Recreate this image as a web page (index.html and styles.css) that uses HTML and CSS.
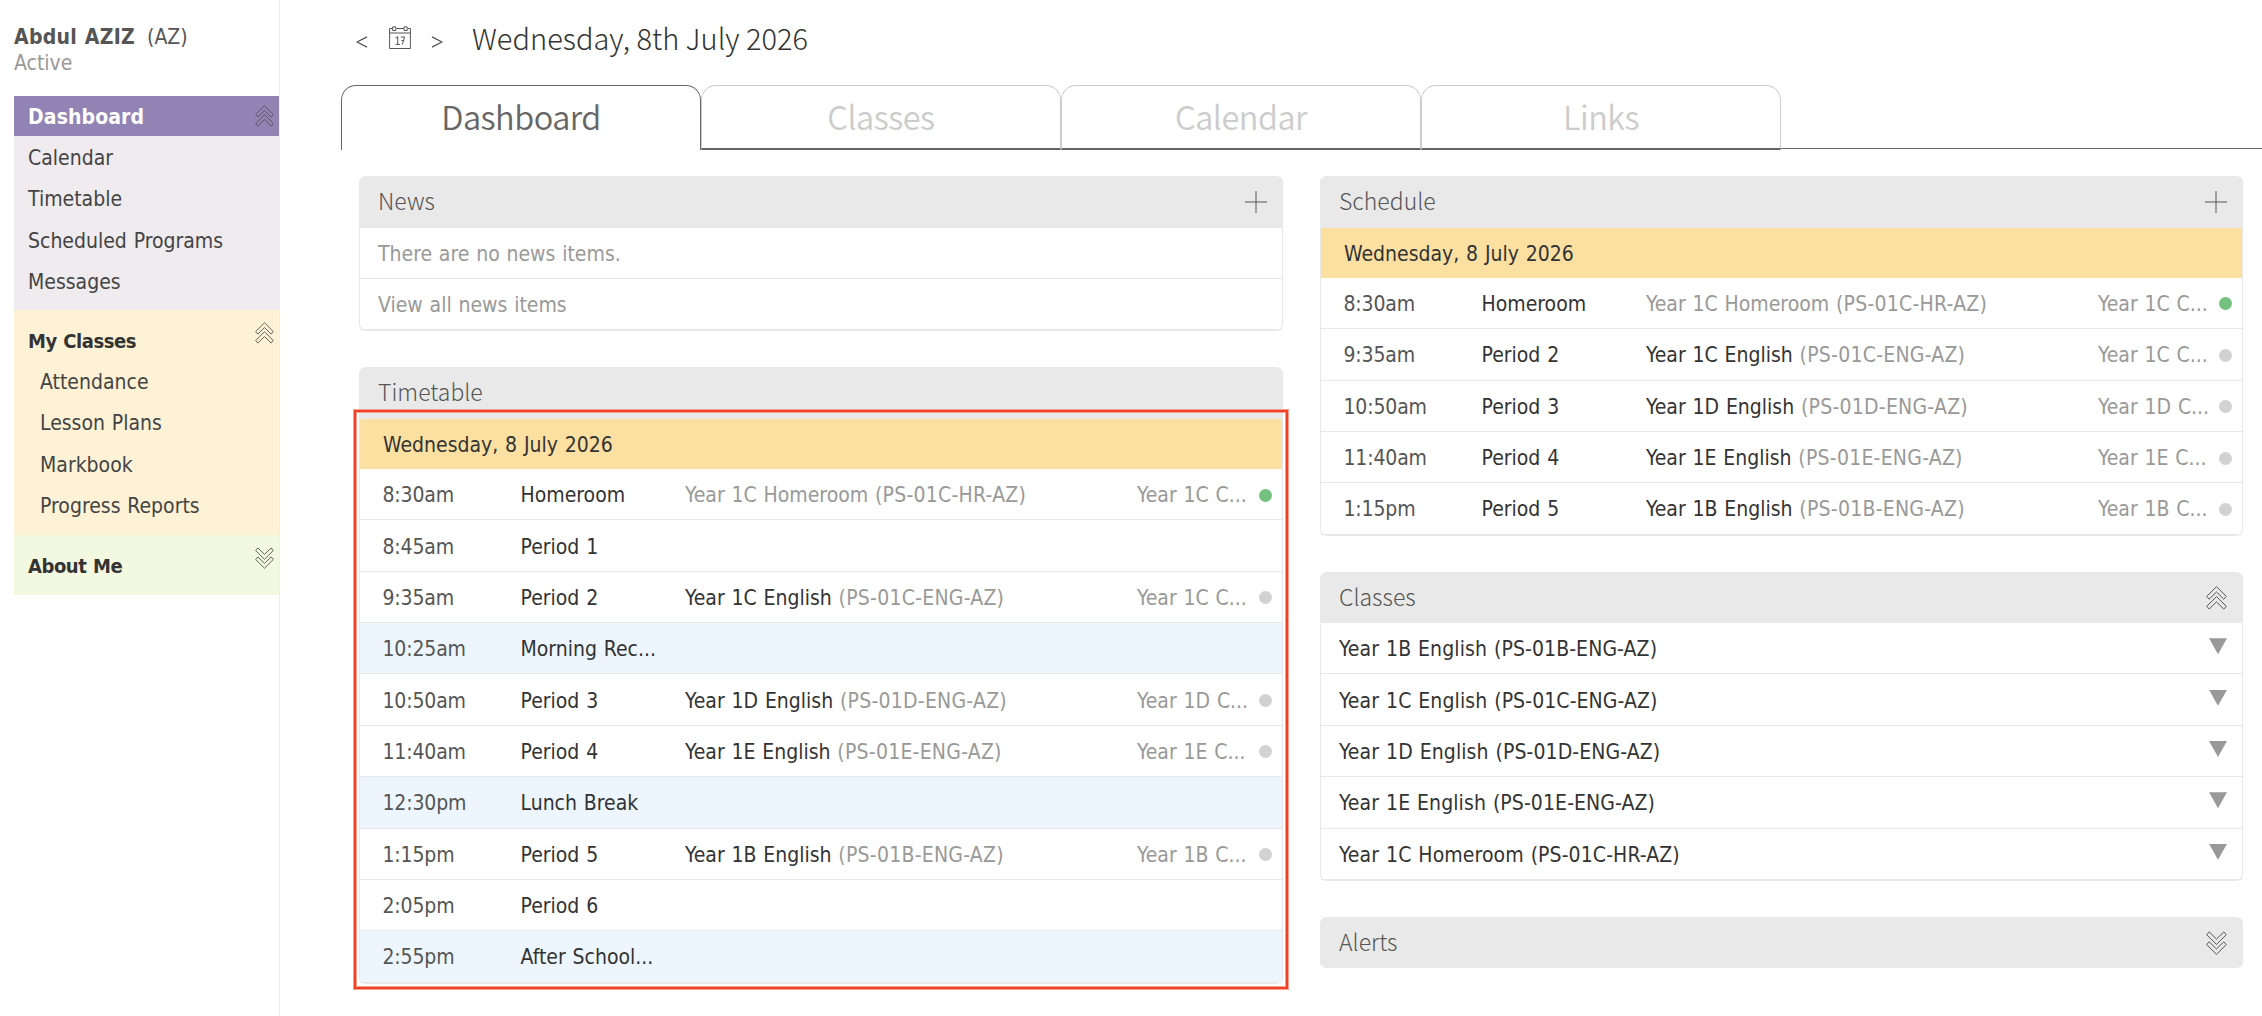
FILE: index.html
```
<!DOCTYPE html>
<html lang="en">
<head>
    <meta charset="UTF-8">
    <meta name="viewport" content="width=device-width, initial-scale=1.0">
    <title>Dashboard</title>
    <link rel="stylesheet" href="styles.css">
</head>
<body>
    <!-- Shared icons -->
    <svg class="icon-defs" width="0" height="0">
        <symbol id="chevrons-up" viewBox="0 0 21 24">
            <path d="M10.5 .7L20.3 10.4L17.8 13.2L10.5 6L3.2 13.2L.7 10.4Z"/>
            <path d="M10.5 10.6L20.3 20.3L17.8 23.1L10.5 15.9L3.2 23.1L.7 20.3Z"/>
        </symbol>
        <symbol id="chevrons-down" viewBox="0 0 21 24">
            <path d="M10.5 23.3L20.3 13.6L17.8 10.8L10.5 18L3.2 10.8L.7 13.6Z"/>
            <path d="M10.5 13.4L20.3 3.7L17.8 .9L10.5 8.1L3.2 .9L.7 3.7Z"/>
        </symbol>
        <symbol id="plus" viewBox="0 0 22 22">
            <path d="M11 0V22M0 11H22"/>
        </symbol>
    </svg>

    <div class="layout">
        <aside class="sidebar">
            <div class="user">
                <div class="user-name"><strong>Abdul AZIZ</strong><span>(AZ)</span></div>
                <div class="user-status">Active</div>
            </div>
            <nav class="menu">
                <div class="menu-group menu-dashboard">
                    <div class="menu-title"><span>Dashboard</span><svg class="chevrons"><use href="#chevrons-up"/></svg></div>
                    <a class="menu-item">Calendar</a>
                    <a class="menu-item">Timetable</a>
                    <a class="menu-item">Scheduled Programs</a>
                    <a class="menu-item">Messages</a>
                </div>
                <div class="menu-group menu-classes">
                    <div class="menu-title"><span>My Classes</span><svg class="chevrons"><use href="#chevrons-up"/></svg></div>
                    <a class="menu-item">Attendance</a>
                    <a class="menu-item">Lesson Plans</a>
                    <a class="menu-item">Markbook</a>
                    <a class="menu-item">Progress Reports</a>
                </div>
                <div class="menu-group menu-about">
                    <div class="menu-title"><span>About Me</span><svg class="chevrons"><use href="#chevrons-down"/></svg></div>
                </div>
            </nav>
        </aside>

        <main class="main">
            <header class="date-bar">
                <svg class="arrow" viewBox="0 0 12 12"><path d="M11 .8L1 6L11 11.2"/></svg>
                <svg class="calendar-icon" viewBox="0 0 22 24">
                    <path d="M3 2.5H.6V22.5H21.4V2.5H19M7.5 2.5H14.5M.6 7H21.4"/>
                    <rect x="3.6" y=".9" width="3.2" height="3.6"/>
                    <rect x="15" y=".9" width="3.2" height="3.6"/>
                    <path d="M6.5 12L8.7 10.6V18.4M6.6 18.4H10.8M11.8 11H15.6L13.2 18.6M12.4 14.6H15.2"/>
                </svg>
                <svg class="arrow" viewBox="0 0 12 12"><path d="M1 .8L11 6L1 11.2"/></svg>
                <h1>Wednesday, 8th July 2026</h1>
            </header>

            <div class="tabs">
                <a class="tab active">Dashboard</a>
                <a class="tab">Classes</a>
                <a class="tab">Calendar</a>
                <a class="tab">Links</a>
                <span class="tabs-rest"></span>
            </div>

            <div class="columns">
                <div class="column">
                    <section class="panel">
                        <h2>News<svg class="plus"><use href="#plus"/></svg></h2>
                        <div class="row muted">There are no news items.</div>
                        <div class="row muted">View all news items</div>
                    </section>

                    <section class="panel">
                        <h2>Timetable</h2>
                        <div class="day">Wednesday, 8 July 2026</div>
                        <div class="row period"><time>8:30am</time><span>Homeroom</span><span class="muted">Year 1C Homeroom <em>(PS-01C-HR-AZ)</em></span><span class="muted">Year 1C C...</span><i class="dot done"></i></div>
                        <div class="row period"><time>8:45am</time><span>Period 1</span></div>
                        <div class="row period"><time>9:35am</time><span>Period 2</span><span>Year 1C English <em>(PS-01C-ENG-AZ)</em></span><span class="muted">Year 1C C...</span><i class="dot"></i></div>
                        <div class="row period break"><time>10:25am</time><span>Morning Rec...</span></div>
                        <div class="row period"><time>10:50am</time><span>Period 3</span><span>Year 1D English <em>(PS-01D-ENG-AZ)</em></span><span class="muted">Year 1D C...</span><i class="dot"></i></div>
                        <div class="row period"><time>11:40am</time><span>Period 4</span><span>Year 1E English <em>(PS-01E-ENG-AZ)</em></span><span class="muted">Year 1E C...</span><i class="dot"></i></div>
                        <div class="row period break"><time>12:30pm</time><span>Lunch Break</span></div>
                        <div class="row period"><time>1:15pm</time><span>Period 5</span><span>Year 1B English <em>(PS-01B-ENG-AZ)</em></span><span class="muted">Year 1B C...</span><i class="dot"></i></div>
                        <div class="row period"><time>2:05pm</time><span>Period 6</span></div>
                        <div class="row period break"><time>2:55pm</time><span>After School...</span></div>
                        <div class="highlight"></div>
                    </section>
                </div>

                <div class="column">
                    <section class="panel">
                        <h2>Schedule<svg class="plus"><use href="#plus"/></svg></h2>
                        <div class="day">Wednesday, 8 July 2026</div>
                        <div class="row period"><time>8:30am</time><span>Homeroom</span><span class="muted">Year 1C Homeroom <em>(PS-01C-HR-AZ)</em></span><span class="muted">Year 1C C...</span><i class="dot done"></i></div>
                        <div class="row period"><time>9:35am</time><span>Period 2</span><span>Year 1C English <em>(PS-01C-ENG-AZ)</em></span><span class="muted">Year 1C C...</span><i class="dot"></i></div>
                        <div class="row period"><time>10:50am</time><span>Period 3</span><span>Year 1D English <em>(PS-01D-ENG-AZ)</em></span><span class="muted">Year 1D C...</span><i class="dot"></i></div>
                        <div class="row period"><time>11:40am</time><span>Period 4</span><span>Year 1E English <em>(PS-01E-ENG-AZ)</em></span><span class="muted">Year 1E C...</span><i class="dot"></i></div>
                        <div class="row period"><time>1:15pm</time><span>Period 5</span><span>Year 1B English <em>(PS-01B-ENG-AZ)</em></span><span class="muted">Year 1B C...</span><i class="dot"></i></div>
                    </section>

                    <section class="panel">
                        <h2>Classes<svg class="chevrons"><use href="#chevrons-up"/></svg></h2>
                        <div class="row class">Year 1B English (PS-01B-ENG-AZ)<i class="triangle"></i></div>
                        <div class="row class">Year 1C English (PS-01C-ENG-AZ)<i class="triangle"></i></div>
                        <div class="row class">Year 1D English (PS-01D-ENG-AZ)<i class="triangle"></i></div>
                        <div class="row class">Year 1E English (PS-01E-ENG-AZ)<i class="triangle"></i></div>
                        <div class="row class">Year 1C Homeroom (PS-01C-HR-AZ)<i class="triangle"></i></div>
                    </section>

                    <section class="panel collapsed">
                        <h2>Alerts<svg class="chevrons"><use href="#chevrons-down"/></svg></h2>
                    </section>
                </div>
            </div>
        </main>
    </div>
</body>
</html>
```
FILE: styles.css
```
* {
    box-sizing: border-box;
}

body {
    margin: 0;
    background: #fff;
    color: #333;
    font-family: Tahoma, "DejaVu Sans Condensed", "DejaVu Sans", sans-serif;
    font-size: 21px;
    word-spacing: 0.8px;
    overflow: hidden;
}

.icon-defs {
    display: block;
}

.layout {
    display: flex;
    height: 1016px;
    overflow: hidden;
}

/* Sidebar */
.sidebar {
    width: 280px;
    flex: none;
    padding: 24px 0 0 14px;
    border-right: 1px solid #eee;
}

.user {
    height: 72px;
    line-height: 26px;
}

.user-name {
    display: flex;
    gap: 12px;
    color: #555;
}

.user-name strong {
    letter-spacing: 0.3px;
}

.user-status {
    color: #999;
}

.menu-title {
    display: flex;
    justify-content: space-between;
    padding: 0 5px 0 14px;
    font-size: 20px;
    font-weight: bold;
    letter-spacing: -0.45px;
    line-height: 42px;
}

.menu-item {
    display: block;
    padding-left: 14px;
    color: #444;
    line-height: 41.3px;
}

.menu .chevrons {
    width: 19px;
    height: 22px;
}

.menu-dashboard {
    height: 214px;
    background: #efebef;
}

.menu-dashboard .menu-title {
    height: 40px;
    margin-bottom: 2px;
    background: #9283b5;
    color: #fff;
    font-size: 21px;
    letter-spacing: 0.1px;
    line-height: 43px;
}

.menu-dashboard .chevrons {
    margin-top: 9px;
}

.menu-classes {
    height: 225px;
    padding-top: 10px;
    background: #fdf2d6;
}

.menu-classes .menu-item {
    padding-left: 26px;
}

.menu-about {
    height: 60px;
    padding-top: 10px;
    background: #f3f8e0;
}

.menu-classes .chevrons,
.menu-about .chevrons {
    margin-top: 2px;
}

/* Icons */
svg {
    fill: none;
    stroke: #555;
    stroke-linejoin: round;
}

.chevrons {
    width: 21px;
    height: 24px;
}

.plus {
    width: 22px;
    height: 22px;
}

.triangle {
    width: 18px;
    height: 16px;
    margin: -6px 5px 0 auto;
    background: #999;
    clip-path: polygon(0 0, 100% 0, 50% 100%);
}

/* Header */
.main {
    flex: 1;
    padding-left: 61px;
}

.date-bar {
    display: flex;
    align-items: center;
    height: 85px;
    padding: 0 0 6px 15px;
}

.arrow {
    width: 12px;
    height: 12px;
    margin-top: 4px;
    stroke-width: 1.4;
}

.calendar-icon {
    width: 22px;
    height: 24px;
    margin: -4px 20px 0 21px;
}

h1 {
    margin: -6px 0 0 29px;
    font-family: "Noto Sans CJK SC", sans-serif;
    font-size: 29px;
    font-weight: 300;
    word-spacing: 0;
}

/* Tabs */
.tabs {
    display: flex;
    height: 65px;
}

.tab {
    width: 360px;
    border: 1px solid #ccc;
    border-bottom: 2px solid #666;
    border-radius: 15px 15px 0 0;
    color: #ccc;
    font-family: "Noto Sans CJK SC", sans-serif;
    font-size: 32.5px;
    font-weight: 350;
    letter-spacing: -0.5px;
    line-height: 59px;
    text-align: center;
}

.tab.active {
    border-color: #666;
    border-bottom: 0;
    color: #666;
}

.tabs-rest {
    flex: 1;
    height: 64px;
    border-bottom: 1px solid #666;
}

/* Panels */
.columns {
    display: grid;
    grid-template-columns: 924px 923px;
    gap: 37px;
    padding: 26px 0 0 18px;
}

.panel {
    position: relative;
    margin-bottom: 36px;
    border: solid #e8e8e8;
    border-width: 0 1px 1px;
    border-radius: 7px;
}

.panel:last-child {
    margin-bottom: 0;
}

.panel h2 {
    display: flex;
    align-items: center;
    justify-content: space-between;
    height: 51.5px;
    margin: 0 -1px;
    padding: 0 16px 0 19px;
    border-radius: 7px 7px 0 0;
    background: #e9e9e9;
    color: #555;
    font-family: "Noto Sans CJK SC", sans-serif;
    font-size: 23px;
    font-weight: 300;
    line-height: 48px;
    align-items: flex-start;
    word-spacing: 0;
}

.panel h2 svg {
    margin-top: 14px;
}

.panel h2 .plus {
    margin-top: 15px;
}

.panel.collapsed {
    border-bottom: 0;
}

.collapsed h2 {
    border-radius: 7px;
}

.day {
    height: 50.3px;
    padding-left: 23px;
    background: #fbe0a2;
    line-height: 52px;
}

.row {
    display: flex;
    align-items: center;
    height: 51.37px;
    padding: 2px 10px 0 18px;
    border-bottom: 1px solid #e8e8e8;
    white-space: nowrap;
}

.period {
    display: grid;
    grid-template-columns: 138px 164.5px 452px 1fr auto;
    padding-left: 22.5px;
}

.period time {
    color: #555;
    letter-spacing: -0.15px;
}

.class {
    letter-spacing: 0.1px;
}

.break {
    background: #edf6fe;
}

.row em {
    color: #999;
    font-style: normal;
    letter-spacing: 0.25px;
}

.muted {
    color: #999;
}

.dot {
    width: 13px;
    height: 13px;
    border-radius: 50%;
    background: #d2d2d2;
}

.dot.done {
    background: #73c17c;
}

/* Marker around the day's periods */
.highlight {
    position: absolute;
    top: 43px;
    right: -6px;
    bottom: -6px;
    left: -6px;
    border: 2px solid #f04026;
    box-shadow: 0 0 0 1px #f5a090, inset 0 0 0 1px #f5a090;
}
```
